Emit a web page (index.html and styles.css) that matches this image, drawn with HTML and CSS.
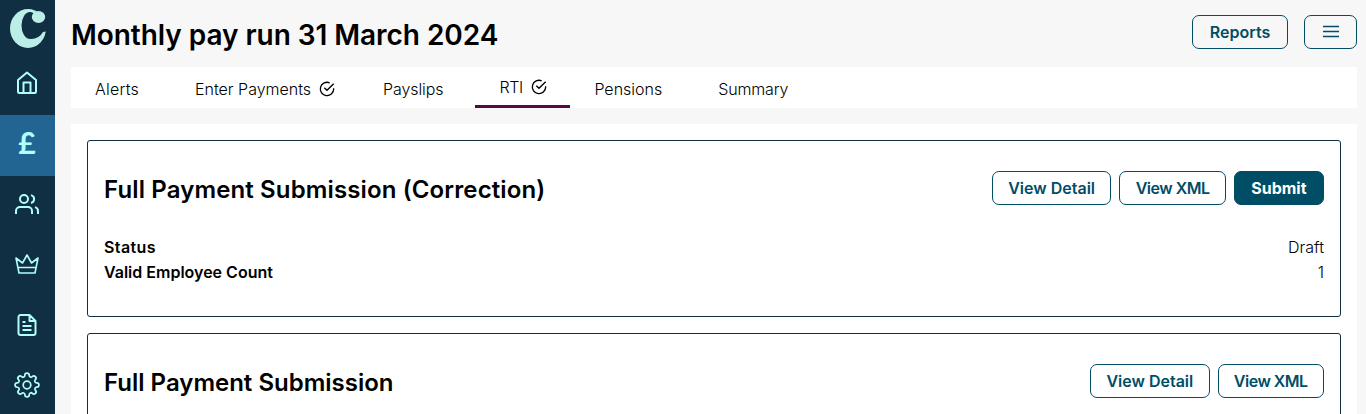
FILE: index.html
```html
<!DOCTYPE html>
<html lang="en">
<head>
    <meta charset="UTF-8">
    <title>Monthly pay run</title>
    <link rel="stylesheet" href="styles.css">
</head>
<body>
    <nav class="sidebar">
        <a class="logo" href="#">
            <svg width="36" height="40" viewBox="0 0 36 40">
                <mask id="opening">
                    <rect width="36" height="40" fill="#fff"/>
                    <ellipse cx="20" cy="17.500" rx="8.500" ry="13.500" fill="#000"/>
                    <path d="M20 12H36V23.500L33 24Q29 31 21 31Z" fill="#000"/>
                </mask>
                <ellipse cx="18" cy="20.500" rx="18" ry="19.500" mask="url(#opening)"/>
                <ellipse cx="28.500" cy="9" rx="6.700" ry="6"/>
            </svg>
        </a>
        <a class="nav-item" href="#">
            <svg width="24" height="24" viewBox="0 0 24 24"><path d="M3 9 12 1.500l9 7.500V20.500a1.500 1.500 0 0 1-1.500 1.500h-15A1.500 1.500 0 0 1 3 20.500zM8.500 21.500V11.500h7v10"/></svg>
        </a>
        <a class="nav-item active" href="#"><span class="pound">£</span></a>
        <a class="nav-item" href="#">
            <svg width="24" height="24" viewBox="0 0 24 24"><circle cx="9" cy="7" r="4"/><path d="M1 22v-3a4 4 0 0 1 4-4h8a4 4 0 0 1 4 4v3M16 3.100a4 4 0 0 1 0 7.800M23 22v-3a4 4 0 0 0-3-3.900"/></svg>
        </a>
        <a class="nav-item" href="#">
            <svg class="thin" width="24" height="24" viewBox="0 0 24 24"><path d="M4 21 1 6l6.500 5L12 3l4.500 8L23 6l-3 15zM3.500 15.500h17"/></svg>
        </a>
        <a class="nav-item" href="#">
            <svg width="24" height="24" viewBox="0 0 24 24"><path d="M14.500 2H5.500a2 2 0 0 0-2 2v16a2 2 0 0 0 2 2h13a2 2 0 0 0 2-2V8zM14.500 2v6h6M7.500 9h3M7.500 13h9M7.500 17h9"/></svg>
        </a>
        <a class="nav-item" href="#">
            <svg class="thin" width="26" height="26" viewBox="0 0 24 24"><circle cx="12" cy="12" r="3.500"/><path d="M19.400 15a1.650 1.650 0 0 0 .33 1.820l.06.06a2 2 0 0 1-2.830 2.830l-.06-.06a1.650 1.650 0 0 0-1.820-.33 1.650 1.650 0 0 0-1 1.510V21a2 2 0 0 1-4 0v-.09A1.650 1.650 0 0 0 9 19.400a1.650 1.650 0 0 0-1.820.33l-.06.06a2 2 0 0 1-2.830-2.830l.06-.06a1.650 1.650 0 0 0 .33-1.820 1.650 1.650 0 0 0-1.510-1H3a2 2 0 0 1 0-4h.09A1.650 1.650 0 0 0 4.600 9a1.650 1.650 0 0 0-.33-1.820l-.06-.06a2 2 0 0 1 2.830-2.830l.06.06a1.650 1.650 0 0 0 1.820.33H9a1.650 1.650 0 0 0 1-1.510V3a2 2 0 0 1 4 0v.09a1.650 1.650 0 0 0 1 1.510 1.650 1.650 0 0 0 1.820-.33l.06-.06a2 2 0 0 1 2.830 2.830l-.06.06a1.650 1.650 0 0 0-.33 1.820V9a1.650 1.650 0 0 0 1.510 1H21a2 2 0 0 1 0 4h-.09a1.650 1.650 0 0 0-1.510 1z"/></svg>
        </a>
    </nav>

    <main class="content">
        <header class="page-header">
            <h1>Monthly pay run 31 March 2024</h1>
            <div class="header-buttons">
                <button class="btn reports">Reports</button>
                <button class="btn menu">
                    <svg width="18" height="14" viewBox="0 0 18 14"><path d="M1 2.500h16M1 7.500h16M1 12.500h16"/></svg>
                </button>
            </div>
        </header>

        <div class="tabs">
            <a class="tab alerts"><span>Alerts</span></a>
            <a class="tab"><span>Enter Payments</span><svg width="16" height="16" viewBox="0 0 24 24"><path d="M22 11v1a10 10 0 1 1-6-9.200M22 4 12 14l-4-4"/></svg></a>
            <a class="tab payslips"><span>Payslips</span></a>
            <a class="tab selected"><span>RTI</span><svg width="16" height="16" viewBox="0 0 24 24"><path d="M22 11v1a10 10 0 1 1-6-9.200M22 4 12 14l-4-4"/></svg></a>
            <a class="tab"><span>Pensions</span></a>
            <a class="tab summary"><span>Summary</span></a>
        </div>

        <section class="panel">
            <div class="card">
                <div class="card-header">
                    <h2 class="correction">Full Payment Submission (Correction)</h2>
                    <div class="card-buttons">
                        <button class="btn detail">View Detail</button>
                        <button class="btn xml">View XML</button>
                        <button class="btn primary">Submit</button>
                    </div>
                </div>
                <dl class="details">
                    <div class="row"><dt class="status">Status</dt><dd>Draft</dd></div>
                    <div class="row"><dt>Valid Employee Count</dt><dd>1</dd></div>
                </dl>
            </div>
            <div class="card">
                <div class="card-header">
                    <h2>Full Payment Submission</h2>
                    <div class="card-buttons">
                        <button class="btn detail">View Detail</button>
                        <button class="btn xml">View XML</button>
                    </div>
                </div>
            </div>
        </section>
    </main>
</body>
</html>
```

FILE: styles.css
```css
* {
    box-sizing: border-box;
}

body {
    margin: 0;
    height: 414px;
    display: flex;
    overflow: hidden;
    background-color: #f7f7f7;
    color: #000;
    font-family: Inter, sans-serif;
    font-size: 16px;
}

.sidebar {
    width: 55px;
    height: 414px;
    flex-shrink: 0;
    overflow: hidden;
    background-color: #112f42;
}

.logo {
    display: block;
    height: 54.5px;
    padding: 8px 0 0 10px;
}

.logo svg {
    display: block;
    fill: #bbeee6;
}

.nav-item {
    display: flex;
    align-items: center;
    justify-content: center;
    height: 60.5px;
    padding: 0 1px 4px 0;
    color: #affffa;
    text-decoration: none;
}

.nav-item.active {
    background-color: #236592;
}

.nav-item svg {
    flex-shrink: 0;
    fill: none;
    stroke: currentColor;
    stroke-width: 2;
    stroke-linejoin: round;
}

.nav-item svg.thin {
    stroke-width: 1.6;
}

.pound {
    margin-top: -2px;
    font: bold 30px Lato, sans-serif;
}

.content {
    flex: 1;
    height: 414px;
    overflow: hidden;
    padding: 0 9px 0 16px;
}

.page-header {
    display: flex;
    justify-content: space-between;
    height: 67px;
    padding-top: 15px;
}

h1, h2 {
    margin: 0;
    font-weight: 600;
    white-space: nowrap;
}

h1 {
    font-size: 28px;
    line-height: 40px;
    letter-spacing: -0.05px;
}

h2 {
    font-size: 24px;
    line-height: 38px;
}

.correction {
    letter-spacing: 0.13px;
}

.header-buttons {
    display: flex;
    gap: 16px;
}

.btn {
    height: 34px;
    padding: 0;
    border: 1px solid #004d66;
    border-radius: 7px;
    background: transparent;
    color: #004d66;
    font: 600 16px/30px Inter, sans-serif;
}

.reports {
    width: 96px;
}

.menu {
    width: 53px;
}

.menu svg {
    stroke: currentColor;
    stroke-width: 1.4;
}

.detail {
    width: 119.4px;
}

.xml {
    width: 106.5px;
    letter-spacing: -0.5px;
}

.primary {
    width: 90.2px;
    background: #004d66;
    color: #fff;
    font-weight: 700;
}

.tabs {
    display: flex;
    height: 41px;
    background-color: #fff;
}

.tab {
    display: flex;
    align-items: center;
    padding: 3px 24px 0;
    font-weight: 300;
}

.tab span {
    margin-right: 8px;
}

.tab svg {
    flex-shrink: 0;
    overflow: visible;
    fill: none;
    stroke: #000;
    stroke-width: 2;
}

.alerts {
    letter-spacing: 0.22px;
}

.payslips {
    letter-spacing: -0.1px;
}

.summary {
    letter-spacing: -0.15px;
}

.tab.selected {
    width: 95px;
    padding-top: 1px;
    letter-spacing: -0.4px;
    border-bottom: 3px solid #560a40;
}

.panel {
    margin-top: 16px;
    padding: 16px;
    background-color: #fff;
}

.card {
    height: 177px;
    margin-bottom: 16px;
    padding: 30px 16px 0;
    border: 1px solid #112f42;
    border-radius: 3px;
}

.card-header {
    display: flex;
    justify-content: space-between;
}

.card-buttons {
    display: flex;
    gap: 8px;
}

.details {
    margin: 26px 0 0;
}

.row {
    display: flex;
    justify-content: space-between;
    line-height: 25px;
}

dt {
    font-weight: 600;
}

.status {
    letter-spacing: 0.4px;
}

dd {
    margin: 0;
    font-weight: 300;
}
```
